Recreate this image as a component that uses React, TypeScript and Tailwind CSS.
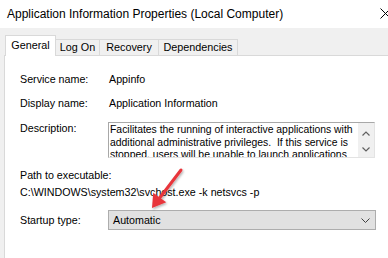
import React from "react";

const font = { fontFamily: '"Liberation Sans", Arial, sans-serif' };

function Row({ label, children, className = "" }: { label: string; children: React.ReactNode; className?: string }) {
  return (
    <div className={"flex items-start " + className}>
      <div className="w-[89px] shrink-0">{label}</div>
      <div className="flex-1">{children}</div>
    </div>
  );
}

export default function App() {
  return (
    <div className="relative w-[388px] h-[258px] overflow-hidden bg-[#f0f0f0] text-black" style={font}>
      {/* Title bar */}
      <div className="h-[28px] bg-white flex items-center pl-[7px] text-[12px] leading-[14px] relative">
        <span>Application Information Properties (Local Computer)</span>
        <svg className="absolute left-[380px] top-[8px]" width="11" height="11" viewBox="0 0 11 11">
          <path d="M0.5 0.5 L10.5 10.5 M10.5 0.5 L0.5 10.5" stroke="#000" strokeWidth="1" fill="none" />
        </svg>
      </div>

      {/* Tab strip */}
      <div className="h-[27px] flex items-end pl-[5px] text-[10.8px] leading-[13px]">
        <div className="relative z-10 h-[21px] w-[51px] bg-white border border-b-0 border-[#d9d9d9] flex items-start justify-center pt-[3px] -mb-[1px]">
          General
        </div>
        <div className="h-[16px] w-[44px] bg-[#f0f0f0] border border-l-0 border-b-0 border-[#d9d9d9] flex items-center justify-center">
          Log On
        </div>
        <div className="h-[16px] w-[59px] bg-[#f0f0f0] border border-l-0 border-b-0 border-[#d9d9d9] flex items-center justify-center">
          Recovery
        </div>
        <div className="h-[16px] w-[79px] bg-[#f0f0f0] border border-l-0 border-b-0 border-[#d9d9d9] flex items-center justify-center">
          Dependencies
        </div>
      </div>

      {/* Panel */}
      <div className="ml-[4px] h-[210px] bg-white border-l border-t border-[#d9d9d9] pl-[15px] pt-[17px] text-[10.7px] leading-[13px]">
        <Row label="Service name:">Appinfo</Row>
        <Row label="Display name:" className="mt-[10.5px]">Application Information</Row>
        <Row label="Description:" className="mt-[12.5px]">
          <div className="h-[36px] w-[267px] -ml-[1px] flex border border-t-[#a8a8a8] border-l-[#a8a8a8] border-r-[#e3e3e3] border-b-[#e3e3e3] overflow-hidden">
            <div className="flex-1 pl-[1px] pt-[1px] text-[10.4px] leading-[12.5px] whitespace-nowrap overflow-hidden">
              <div>Facilitates the running of interactive applications with</div>
              <div>additional administrative privileges.&nbsp; If this service is</div>
              <div>stopped, users will be unable to launch applications</div>
            </div>
            <div className="w-[16px] shrink-0 bg-[#f0f0f0] flex flex-col items-center pt-[8px] gap-[11px]">
              <svg width="8" height="5" viewBox="0 0 8 5">
                <path d="M0.5 4.5 L4 1 L7.5 4.5" stroke="#606060" strokeWidth="1.2" fill="none" />
              </svg>
              <svg width="8" height="5" viewBox="0 0 8 5">
                <path d="M0.5 0.5 L4 4 L7.5 0.5" stroke="#606060" strokeWidth="1.2" fill="none" />
              </svg>
            </div>
          </div>
        </Row>
        <div className="mt-[10.5px]">Path to executable:</div>
        <div className="mt-[4px]">C:\WINDOWS\system32\svchost.exe -k netsvcs -p</div>
        <div className="mt-[11.5px] flex items-center">
          <div className="w-[89px] shrink-0">Startup type:</div>
          <div className="-ml-[1px] h-[20px] w-[268px] bg-[#e1e1e1] border border-[#adadad] flex items-center justify-between pl-[4px] pr-[5px]">
            <span>Automatic</span>
            <svg width="9" height="5" viewBox="0 0 9 5">
              <path d="M0.5 0.5 L4.5 4.5 L8.5 0.5" stroke="#404040" strokeWidth="1" fill="none" />
            </svg>
          </div>
        </div>
      </div>

      {/* Red annotation arrow */}
      <svg className="absolute left-0 top-0 pointer-events-none" width="388" height="258" viewBox="0 0 388 258">
        <defs>
          <filter id="sh" x="-50%" y="-50%" width="200%" height="200%">
            <feDropShadow dx="1" dy="1.5" stdDeviation="1.2" floodColor="#000" floodOpacity="0.3" />
          </filter>
        </defs>
        <g filter="url(#sh)">
          <line x1="181" y1="170" x2="160" y2="197.5" stroke="#e8353b" strokeWidth="3" strokeLinecap="round" />
          <polygon points="152,208 166.2,202.3 153.2,192.7" fill="#e8353b" />
        </g>
      </svg>
    </div>
  );
}
